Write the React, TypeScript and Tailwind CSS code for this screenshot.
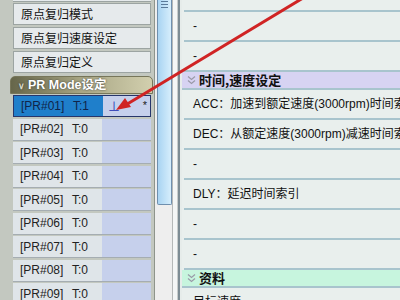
import React from "react";

const latin = { fontFamily: '"Liberation Sans", "Noto Sans CJK SC", sans-serif' };

const menuItems = ["原点复归模式", "原点复归速度设定", "原点复归定义"];

const prRows = Array.from({ length: 9 }, (_, i) => ({
  id: String(i + 1).padStart(2, "0"),
  t: i === 0 ? 1 : 0,
}));

type RightRow = { kind: "row"; text: string } | { kind: "head"; text: string; tone: string };

const rightRows: RightRow[] = [
  { kind: "row", text: "-" },
  { kind: "row", text: "-" },
  { kind: "head", text: "时间,速度设定", tone: "bg-[#d7d3f2]" },
  { kind: "row", text: "ACC：加速到额定速度(3000rpm)时间索引" },
  { kind: "row", text: "DEC：从额定速度(3000rpm)减速时间索引" },
  { kind: "row", text: "-" },
  { kind: "row", text: "DLY：延迟时间索引" },
  { kind: "row", text: "-" },
  { kind: "row", text: "-" },
  { kind: "head", text: "资料", tone: "bg-[#c7f5de]" },
  { kind: "row", text: "目标速度" },
];

function Chevrons({ color }: { color: string }) {
  return (
    <svg width="9" height="10" viewBox="0 0 9 10" className="shrink-0">
      <path d="M1 1.5 L4.5 4.5 L8 1.5 M1 5.5 L4.5 8.5 L8 5.5" fill="none" stroke={color} strokeWidth="1.2" />
    </svg>
  );
}

function LeftPanel() {
  return (
    <div className="w-[155px] shrink-0 bg-[#c3c8c0] border-r border-[#8e948c] flex flex-col overflow-hidden">
      <div className="ml-[13px] w-[138px] h-[2px] shrink-0 bg-[#e6eaec] border-b border-[#9ca4a2]" />
      <div className="flex flex-col gap-[2px] mt-[1px] shrink-0">
        {menuItems.map((m) => (
          <div
            key={m}
            className="ml-[13px] w-[138px] h-[22px] shrink-0 bg-[#e6eaec] border border-[#9ca4a2] flex items-center pl-[7px] text-[12px] text-[#111]"
            style={{ fontFamily: '"Noto Sans CJK SC", sans-serif' }}
          >
            {m}
          </div>
        ))}
      </div>
      <div className="ml-[10px] w-[143px] h-[18px] shrink-0 mt-[3px] rounded-t-[5px] border border-[#77765a] bg-gradient-to-r from-[#66664a] via-[#a8a684] to-[#d2cfae] flex items-center gap-[3px] pl-[7px] text-white font-bold text-[12.5px] [text-shadow:0_0_2px_#333]">
        <span className="text-[#d8d8c8] text-[9px] leading-none">∨</span>
        <span style={latin}>PR Mode设定</span>
      </div>
      <div className="flex flex-col gap-[1.5px] mt-[1px] shrink-0">
        {prRows.map((r, i) => {
          const sel = i === 0;
          return (
            <div
              key={r.id}
              className={`ml-[13px] w-[138px] h-[22px] shrink-0 flex text-[12px] ${sel ? "border border-[#27366b]" : "border-b border-[#a5adb2]"}`}
              style={latin}
            >
              <div className={`w-[89px] flex items-center pl-[7px] ${sel ? "bg-[#1f7fcb] text-[#10254a]" : "bg-[#dfe5e9] text-[#222]"}`}>
                <span className="w-[52px]">[PR#{r.id}]</span>
                <span>T:{r.t}</span>
              </div>
              <div className="flex-1 bg-[#c6d0ec] relative">
                {sel && (
                  <>
                    <span className="absolute left-[5px] top-[2px] text-[#1b2fb0] text-[12px]">⊥</span>
                    <span className="absolute right-[3px] top-[1px] text-[#222] text-[11px]">*</span>
                  </>
                )}
              </div>
            </div>
          );
        })}
      </div>
    </div>
  );
}

function ScrollBar() {
  return (
    <div className="w-[18px] shrink-0 bg-[#eeeeee] border-r border-[#b5b8b8] flex flex-col pl-[2px]">
      <div className="w-[15px] h-[205px] shrink-0 bg-gradient-to-r from-[#a9d4f2] to-[#d6eefc] border border-[#6f8fae] border-t-0 rounded-b-[2px] flex flex-col items-center pt-[1px] gap-[2px]">
        <div className="w-[7px] h-[1px] bg-[#5a7a9a]" />
        <div className="w-[7px] h-[1px] bg-[#5a7a9a]" />
        <div className="w-[7px] h-[1px] bg-[#5a7a9a]" />
      </div>
    </div>
  );
}

function RightPanel() {
  return (
    <div className="flex-1 flex min-w-0">
      <div className="w-[5px] bg-[#f4f6f6] border-r border-[#c8cccc]" />
      <div className="w-[4px] bg-[#7d8c94] border-r-2 border-[#e6ecea]" />
      <div className="flex-1 min-w-0 bg-[#e9efed] flex flex-col overflow-hidden pl-[2px]">
        <div className="h-[12px] shrink-0 bg-[#e9efed] border-b-2 border-[#a8c4cd]" />
        {rightRows.map((r, i) =>
          r.kind === "head" ? (
            <div
              key={i}
              className={`h-[18px] shrink-0 -ml-[2px] ${r.tone} flex items-center gap-[3px] pl-[5px] font-bold text-[13px] text-[#111] border-b-2 border-[#a8c4cd]`}
              style={{ fontFamily: '"Noto Sans CJK SC", sans-serif' }}
            >
              <Chevrons color="#9a9aa8" />
              <span>{r.text}</span>
            </div>
          ) : (
            <div
              key={i}
              className="h-[30px] shrink-0 pl-[9px] flex items-center text-[12px] text-[#111] whitespace-nowrap border-b-2 border-[#a8c4cd]"
              style={{ fontFamily: '"Liberation Sans", "Noto Sans CJK SC", sans-serif' }}
            >
              {r.text}
            </div>
          )
        )}
      </div>
    </div>
  );
}

export default function App() {
  return (
    <div className="relative w-[400px] h-[300px] overflow-hidden flex bg-[#c3c8c0]">
      <LeftPanel />
      <ScrollBar />
      <RightPanel />
      <svg className="absolute inset-0 pointer-events-none" width="400" height="300">
        <line x1="308" y1="-5" x2="124" y2="106" stroke="#d02424" strokeWidth="3" strokeLinecap="round" />
        <polygon points="116,110 131,107 125,98" fill="#d02424" />
      </svg>
    </div>
  );
}
